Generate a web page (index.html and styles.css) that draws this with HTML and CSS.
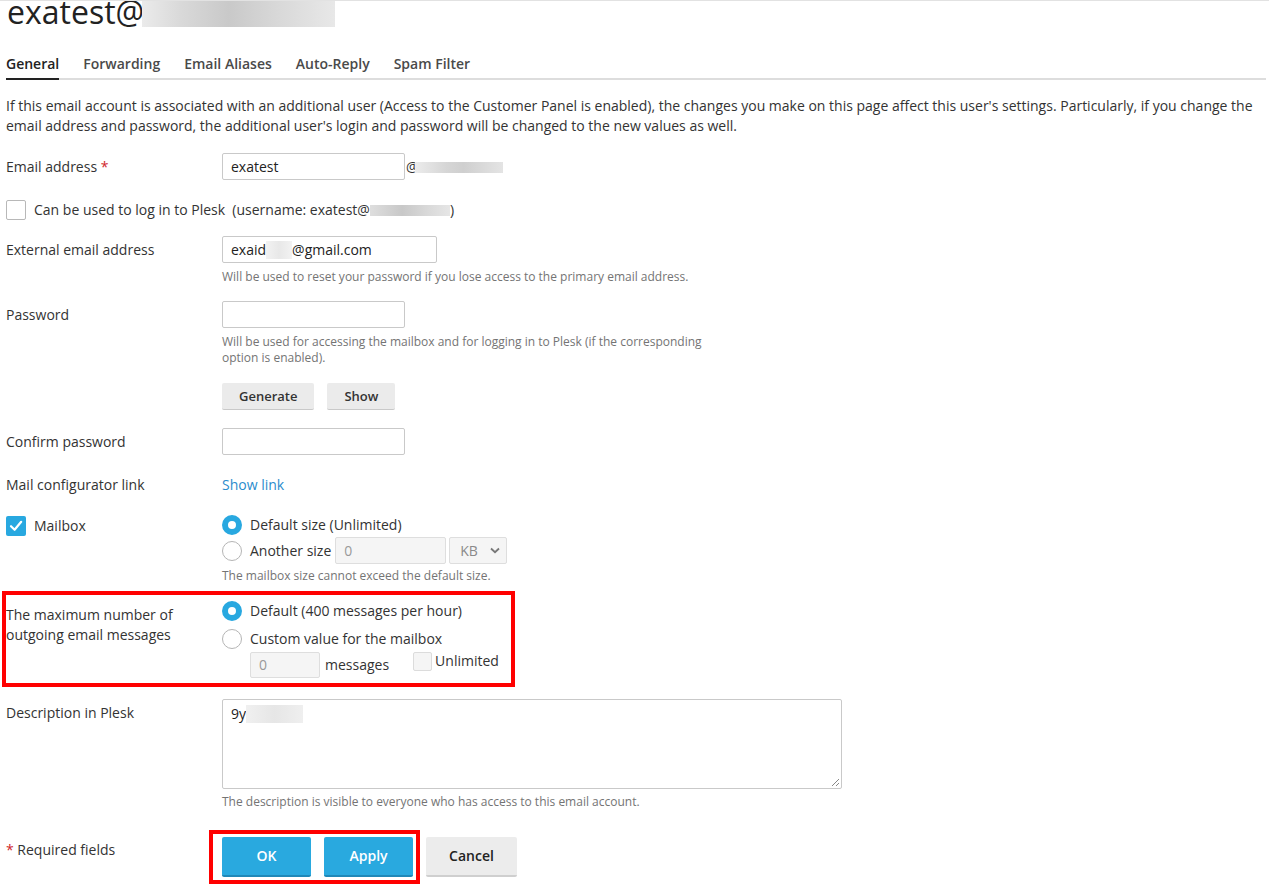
FILE: index.html
```html
<!DOCTYPE html>
<html>
<head>
<meta charset="utf-8">
<link rel="stylesheet" href="styles.css">
</head>
<body>
<div class="page">
  <h1 class="title">exatest@<span class="blur blur-title"></span></h1>
  <nav class="tabs">
    <span class="tab active">General</span>
    <span class="tab">Forwarding</span>
    <span class="tab">Email Aliases</span>
    <span class="tab">Auto-Reply</span>
    <span class="tab">Spam Filter</span>
  </nav>
  <p class="intro">If this email account is associated with an additional user (Access to the Customer Panel is enabled), the changes you make on this page affect this user's settings. Particularly, if you change the email address and password, the additional user's login and password will be changed to the new values as well.</p>

  <div class="form">
    <div class="row row-email">
      <div class="label">Email address <span class="req">*</span></div>
      <div class="field inline">
        <div class="input w-email">exatest</div><span class="at">@</span><span class="blur blur-domain"></span>
      </div>
    </div>

    <div class="line row-login">
      <span class="check"></span>
      <span class="line-text">Can be used to log in to Plesk&nbsp; (username: exatest@<span class="blur blur-user"></span>)</span>
    </div>

    <div class="row row-ext">
      <div class="label">External email address</div>
      <div class="field">
        <div class="input w-ext">exaid<span class="blur blur-ext"></span>@gmail.com</div>
        <div class="hint">Will be used to reset your password if you lose access to the primary email address.</div>
      </div>
    </div>

    <div class="row row-pass">
      <div class="label">Password</div>
      <div class="field">
        <div class="input w-pass"></div>
        <div class="hint hint-wrap">Will be used for accessing the mailbox and for logging in to Plesk (if the corresponding option is enabled).</div>
        <div class="btns-small">
          <span class="btn-s">Generate</span>
          <span class="btn-s">Show</span>
        </div>
      </div>
    </div>

    <div class="row row-confirm">
      <div class="label">Confirm password</div>
      <div class="field"><div class="input w-pass"></div></div>
    </div>

    <div class="row row-link">
      <div class="label label-flat">Mail configurator link</div>
      <div class="field"><span class="link">Show link</span></div>
    </div>

    <div class="row row-mailbox">
      <div class="label label-check"><span class="check on"><svg viewBox="0 0 20 20" width="20" height="20"><path d="M5 10.2 L8.6 13.8 L15.2 5.8" fill="none" stroke="#fff" stroke-width="2.2" stroke-linecap="round" stroke-linejoin="round"/></svg></span>Mailbox</div>
      <div class="field">
        <div class="opt"><span class="radio on"></span><span>Default size (Unlimited)</span></div>
        <div class="opt opt-2"><span class="radio"></span><span>Another size</span>
          <div class="input disabled w-size">0</div>
          <div class="select">KB<svg width="10" height="7" viewBox="0 0 10 7"><path d="M1 1.5 L5 5.2 L9 1.5" fill="none" stroke="#777" stroke-width="1.8"/></svg></div>
        </div>
        <div class="hint hint-size">The mailbox size cannot exceed the default size.</div>
      </div>
    </div>

    <div class="row row-out">
      <div class="label label-flat label-out">The maximum number of outgoing email messages</div>
      <div class="field">
        <div class="opt"><span class="radio on"></span><span>Default (400 messages per hour)</span></div>
        <div class="opt opt-custom"><span class="radio"></span><span>Custom value for the mailbox</span></div>
        <div class="custom-line">
          <div class="msg-group"><div class="input disabled w-msg">0</div><span>messages</span></div>
          <div class="unl-group"><span class="check small"></span><span>Unlimited</span></div>
        </div>
      </div>
    </div>

    <div class="row row-desc">
      <div class="label">Description in Plesk</div>
      <div class="field">
        <div class="textarea">
          <div class="ta-text">9y<span class="blur blur-desc"></span></div>
          <svg class="grip" width="10" height="10" viewBox="0 0 10 10"><path d="M9 2 L2 9 M9 6 L6 9" stroke="#888" stroke-width="1"/></svg>
        </div>
        <div class="hint hint-desc">The description is visible to everyone who has access to this email account.</div>
      </div>
    </div>

    <div class="row row-actions">
      <div class="label label-req"><span class="req">*</span> Required fields</div>
      <div class="field actions">
        <div class="mark">
          <span class="btn btn-primary">OK</span>
          <span class="btn btn-primary">Apply</span>
        </div>
        <span class="btn btn-cancel">Cancel</span>
      </div>
    </div>
  </div>
</div>
</body>
</html>
```
FILE: styles.css
```css
html, body {
  margin: 0;
  padding: 0;
  background: #fff;
}
body {
  font-family: "Open Sans", "DejaVu Sans", sans-serif;
  font-size: 14px;
  line-height: 20px;
  color: #333;
  border-top: 1px solid #e2e2e2;
  overflow: hidden;
}
.page {
  padding: 0 3px 0 6px;
}
.title {
  margin: -5px 0 0 1px;
  font-size: 32px;
  line-height: 32px;
  font-weight: 400;
  color: #222;
  white-space: nowrap;
}
.blur {
  display: inline-block;
  background: linear-gradient(90deg, #ececec 0%, #d6d6d6 35%, #cfcfcf 55%, #e4e4e4 100%);
}
.blur-title {
  width: 193px;
  height: 27px;
  vertical-align: top;
  margin-top: 4px;
  margin-left: -2px;
  background: linear-gradient(90deg, #ebebeb 0%, #d9d9d9 20%, #c9c9c9 45%, #d8d8d8 70%, #e8e8e8 100%);
}
.tabs {
  display: flex;
  margin-top: 26px;
  border-bottom: 2px solid #dddddd;
}
.tab {
  font-weight: 600;
  color: #4a4a4a;
  padding-bottom: 4px;
  margin-right: 24px;
  border-bottom: 2px solid transparent;
  margin-bottom: -2px;
}
.tab.active {
  color: #222;
  border-bottom-color: #222;
}
.intro {
  margin: 16px 0 0;
  color: #333;
}
.form {
  display: flex;
  flex-direction: column;
}
.row {
  display: grid;
  grid-template-columns: 216px 1fr;
  align-items: start;
}
.label {
  padding-top: 4px;
  color: #333;
}
.label-flat {
  padding-top: 0;
}
.req {
  color: #d0262b;
}
.field {
  display: flex;
  flex-direction: column;
  align-items: flex-start;
}
.field.inline {
  flex-direction: row;
  align-items: center;
}
.input {
  box-sizing: border-box;
  height: 27px;
  border: 1px solid #c9c9c9;
  border-radius: 2px;
  padding: 0 8px;
  line-height: 25px;
  color: #222;
  background: #fff;
  white-space: nowrap;
}
.input.disabled {
  background: #f5f5f5;
  border-color: #dedede;
  color: #999;
}
.w-email { width: 183px; }
.w-ext { width: 215px; }
.w-pass { width: 183px; }
.w-size { width: 111px; margin-left: -4px; }
.w-msg { width: 70px; height: 26px; line-height: 24px; }
.at {
  margin-left: 1px;
  color: #333;
}
.blur-domain {
  width: 88px;
  height: 11px;
  margin-left: -4px;
  margin-top: 1px;
}
.blur-ext {
  width: 26px;
  height: 18px;
  vertical-align: -4px;
  margin-left: 0;
  background: linear-gradient(90deg, #f2f2f2, #e8e8e8 50%, #f2f2f2);
}
.blur-user {
  width: 80px;
  height: 11px;
  vertical-align: -1px;
  background: linear-gradient(90deg, #dedede, #c8c8c8 40%, #d8d8d8 70%, #e6e6e6);
}
.blur-desc {
  width: 57px;
  height: 18px;
  vertical-align: -4px;
  background: linear-gradient(90deg, #f0f0f0, #e6e6e6 50%, #efefef);
}
.hint {
  font-size: 12px;
  line-height: 16px;
  color: #747474;
  margin-top: 6px;
}
.hint-wrap {
  max-width: 490px;
}
.hint-size { margin-top: 4px; }
.hint-desc { margin-top: 5px; }

.line {
  display: flex;
  align-items: center;
  gap: 8px;
}
.check {
  box-sizing: border-box;
  width: 20px;
  height: 20px;
  border: 1px solid #b8b8b8;
  border-radius: 2px;
  background: #fff;
  flex: none;
  display: inline-block;
}
.check.on {
  border: none;
  background: #28a8e0;
}
.check.on svg { display: block; }
.check.small {
  width: 19px;
  height: 19px;
  background: #f5f5f5;
  border-color: #dcdcdc;
}
.label-check {
  display: flex;
  align-items: center;
  gap: 8px;
  padding-top: 1px;
}
.btns-small {
  display: flex;
  gap: 13px;
  margin-top: 17px;
}
.btn-s {
  box-sizing: border-box;
  height: 27px;
  line-height: 26px;
  padding: 0 17px;
  font-size: 13px;
  font-weight: 600;
  color: #333;
  background: #ebebeb;
  border-radius: 2px;
  border-bottom: 1px solid #c9c9c9;
}
.link {
  color: #2a8ccd;
}
.opt {
  display: flex;
  align-items: center;
  gap: 8px;
  height: 20px;
}
.opt-2 {
  height: 27px;
  margin-top: 2px;
}
.opt-custom {
  margin-top: 8px;
}
.radio {
  box-sizing: border-box;
  width: 20px;
  height: 20px;
  border-radius: 50%;
  border: 1px solid #b5b5b5;
  background: #fff;
  flex: none;
}
.radio.on {
  border: 6px solid #28a8e0;
}
.select {
  box-sizing: border-box;
  width: 58px;
  height: 27px;
  margin-left: -5px;
  border: 1px solid #dedede;
  border-radius: 2px;
  background: #f5f5f5;
  color: #8a8a8a;
  display: flex;
  align-items: center;
  justify-content: space-between;
  padding: 0 6px 0 10px;
}
.row-out {
  border: 4px solid #ff0000;
  margin-left: -4px;
  width: 505px;
  padding: 6px 0 5px;
  grid-template-columns: 216px 1fr;
}
.label-out {
  padding-top: 4px;
  width: 180px;
}
.custom-line {
  display: flex;
  align-items: flex-start;
  margin-left: 28px;
  margin-top: 2px;
  gap: 24px;
}
.msg-group {
  display: flex;
  align-items: center;
  gap: 5px;
  margin-top: 1px;
}
.unl-group {
  display: flex;
  align-items: center;
  gap: 3px;
}
.textarea {
  box-sizing: border-box;
  width: 620px;
  height: 90px;
  border: 1px solid #c9c9c9;
  border-radius: 2px;
  padding: 4px 1px 1px 8px;
  display: flex;
  flex-direction: column;
  color: #222;
}
.ta-text { flex: 1; }
.grip { align-self: flex-end; display: block; }
.actions {
  flex-direction: row;
  align-items: center;
  gap: 6px;
}
.mark {
  display: flex;
  gap: 13px;
  border: 4px solid #ff0000;
  padding: 3px 3px 3px 9px;
  margin-left: -13px;
}
.btn {
  box-sizing: border-box;
  height: 40px;
  line-height: 38px;
  min-width: 89px;
  padding: 0 20px;
  text-align: center;
  font-weight: 600;
  border-radius: 2px;
}
.btn-primary {
  background: #29a9df;
  color: #fff;
  border-bottom: 2px solid #1f88b8;
}
.btn-cancel {
  background: #ececec;
  color: #222;
  border-bottom: 2px solid #cfcfcf;
  min-width: 91px;
}
.label-req {
  padding-top: 10px;
}

.row-email { margin-top: 17px; }
.row-login { margin-top: 20px; }
.row-ext { margin-top: 16px; }
.row-pass { margin-top: 16px; }
.row-confirm { margin-top: 18px; }
.row-link { margin-top: 20px; }
.row-mailbox { margin-top: 20px; }
.row-out { margin-top: 7px; }
.row-desc { margin-top: 12px; }
.row-actions { margin-top: 20px; }
```
